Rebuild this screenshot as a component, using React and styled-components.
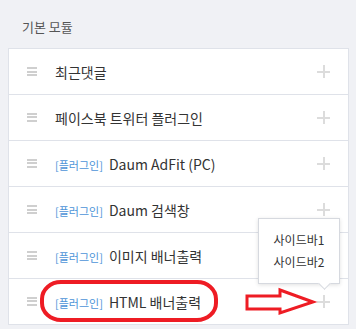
import React from 'react';
import styled, { createGlobalStyle } from 'styled-components';

const GlobalStyle = createGlobalStyle`
  html, body {
    margin: 0;
    padding: 0;
    background: #f0f1f5;
  }
  body {
    font-family: "Noto Sans CJK KR", "Noto Sans", sans-serif;
  }
`;

const Page = styled.div`
  width: 356px;
  height: 329px;
  padding: 0 7px 0 8px;
  box-sizing: border-box;
  position: relative;
  overflow: hidden;
`;

const Title = styled.h3`
  margin: 0;
  height: 48px;
  padding: 5px 0 0 14px;
  box-sizing: border-box;
  display: flex;
  align-items: center;
  font-size: 13px;
  font-weight: 400;
  color: #555;
`;

const List = styled.ul`
  margin: 0;
  padding: 0;
  list-style: none;
  background: #fff;
  border: 1px solid #dfe2e9;
  border-bottom: 0;
`;

const Row = styled.li`
  position: relative;
  height: 45px;
  border-bottom: 1px solid #dfe2e9;
  display: flex;
  align-items: center;
  padding: 0 18px;
`;

const Handle = styled.span`
  width: 10px;
  height: 9px;
  margin-right: 18px;
  flex: none;
  background: linear-gradient(#cfcfcf 0 2px, transparent 2px 3.5px, #cfcfcf 3.5px 5.5px, transparent 5.5px 7px, #cfcfcf 7px 9px);
`;

const Name = styled.span`
  flex: 1;
  font-size: 14px;
  color: #333;
  white-space: nowrap;
`;

const Tag = styled.span`
  font-size: 11px;
  color: #4d94d8;
  margin-right: 6px;
`;

const Plus = styled.span`
  position: relative;
  width: 13px;
  height: 13px;
  flex: none;
  &::before, &::after {
    content: '';
    position: absolute;
    background: #dcdcdc;
  }
  &::before { left: 0; right: 0; top: 6px; height: 1.5px; }
  &::after { top: 0; bottom: 0; left: 6px; width: 1.5px; }
`;

const Popup = styled.div`
  position: absolute;
  right: -10px;
  bottom: 24px;
  width: 80px;
  padding: 10px 0;
  background: #fff;
  border: 1px solid #d6d9df;
  box-shadow: 0 1px 4px rgba(0, 0, 0, 0.12);
  z-index: 2;
  &::after {
    content: '';
    position: absolute;
    right: 10px;
    bottom: -5px;
    width: 8px;
    height: 8px;
    background: #fff;
    border-right: 1px solid #d6d9df;
    border-bottom: 1px solid #d6d9df;
    transform: rotate(45deg);
  }
`;

const PopupItem = styled.div`
  text-align: center;
  font-size: 12px;
  color: #333;
  line-height: 22px;
`;

const Marks = styled.svg`
  position: absolute;
  left: 0;
  top: 0;
  pointer-events: none;
  z-index: 3;
`;

const modules = [
  { name: '최근댓글' },
  { name: '페이스북 트위터 플러그인' },
  { plugin: true, name: 'Daum AdFit (PC)' },
  { plugin: true, name: 'Daum 검색창' },
  { plugin: true, name: '이미지 배너출력' },
  { plugin: true, name: 'HTML 배너출력', menu: true },
];

export default function App() {
  return (
    <Page>
      <GlobalStyle />
      <Title>기본 모듈</Title>
      <List>
        {modules.map(m => (
          <Row key={m.name}>
            <Handle />
            <Name>
              {m.plugin && <Tag>[플러그인]</Tag>}
              {m.name}
            </Name>
            <Plus>
              {m.menu && (
                <Popup>
                  <PopupItem>사이드바1</PopupItem>
                  <PopupItem>사이드바2</PopupItem>
                </Popup>
              )}
            </Plus>
          </Row>
        ))}
      </List>
      <Marks width="356" height="329">
        <rect x="42" y="282" width="174" height="38" rx="19" ry="17" fill="none" stroke="#ee1c24" strokeWidth="4" />
        <path d="M247 296 L280 296 L280 290 L313 302 L280 313 L280 309 L247 309 Z" fill="none" stroke="#ee1c24" strokeWidth="3" />
      </Marks>
    </Page>
  );
}
